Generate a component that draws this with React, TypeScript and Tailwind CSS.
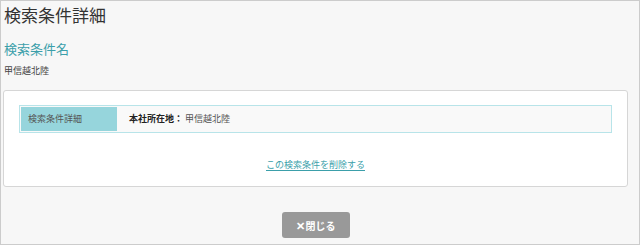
const font = "font-['Noto_Sans_CJK_JP','Noto_Sans',sans-serif]";

export default function App() {
  return (
    <div
      className={`w-[640px] h-[245px] border border-[#cccccc] bg-[#f7f7f7] pl-[2px] pt-[5px] flex flex-col ${font}`}
    >
      <h1 className="text-[17px] leading-none text-[#333] pl-[1px]">検索条件詳細</h1>
      <h2 className="mt-[19px] text-[13px] leading-none text-[#3b9faa] pl-[1px]">検索条件名</h2>
      <p className="mt-[11px] text-[9px] leading-none text-[#444] pl-[1px]">甲信越北陸</p>

      <div className="mt-[15px] w-[625px] h-[97px] bg-white border border-[#d6d6d6] rounded-[3px] px-[15px] pt-[14px] flex flex-col">
        <div className="h-[28px] border border-[#b8e4e9] p-[1px] flex gap-[1px] bg-[#f9f9f9]">
          <div className="w-[96px] bg-[#96d5dc] flex items-center pl-[7px] text-[9px] text-[#555]">
            検索条件詳細
          </div>
          <div className="flex-1 flex items-center pl-[11px] text-[9px] text-[#555]">
            <span className="font-bold text-[#222]">本社所在地：</span>
            <span className="ml-[2px]">甲信越北陸</span>
          </div>
        </div>
        <div className="mt-[27px] flex justify-center">
          <a
            href="#"
            className="text-[9px] leading-none text-[#3b9faa] underline underline-offset-[2px] decoration-[#3b9faa]"
          >
            この検索条件を削除する
          </a>
        </div>
      </div>

      <div className="mt-[25px] w-[625px] flex justify-center">
        <button className="w-[68px] h-[26px] rounded-[3px] bg-[#999999] text-white text-[10px] font-bold flex items-center justify-center gap-[1px]">
          <span className="text-[11px]">✕</span>閉じる
        </button>
      </div>
    </div>
  );
}
